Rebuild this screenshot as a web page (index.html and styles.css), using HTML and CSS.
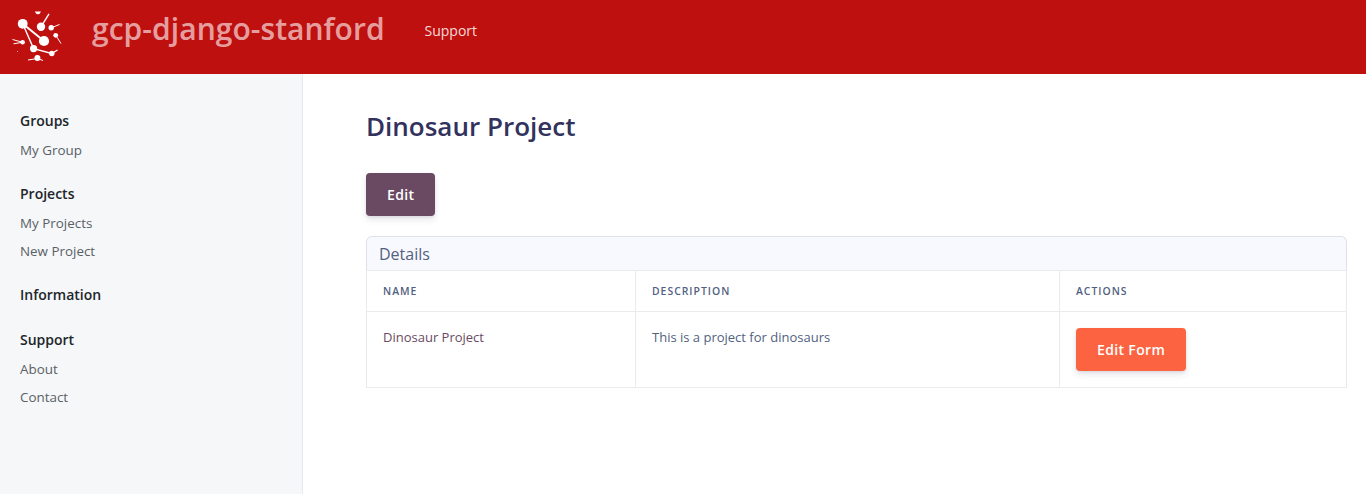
FILE: index.html
```html
<!DOCTYPE html>
<html lang="en">
<head>
<meta charset="utf-8">
<title>gcp-django-stanford</title>
<link rel="stylesheet" href="styles.css">
</head>
<body>
<header class="navbar">
  <svg class="logo" viewBox="0 0 80 74" aria-hidden="true">
    <g fill="#fff">
      <circle cx="22.7" cy="23.8" r="4.9"/>
      <circle cx="41" cy="26.8" r="4.2"/>
      <circle cx="44" cy="41" r="5.1"/>
      <circle cx="33.6" cy="48.6" r="3.6"/>
      <circle cx="51.2" cy="27.8" r="2.7"/>
      <circle cx="55.7" cy="35.3" r="2.4"/>
      <circle cx="22.6" cy="42.3" r="2.3"/>
      <circle cx="51.8" cy="53.5" r="2.7"/>
      <circle cx="37.4" cy="58" r="3"/>
      <path d="M34.7 11.5H41Q40 14.2 38 14.2T34.7 11.5Z"/>
      <path d="M17 51h1v1h-1z" opacity=".6"/>
    </g>
    <g stroke="#fff" fill="none">
      <path stroke-width="2" d="M22.7 23.8 44 41"/>
      <path stroke-width="1.4" d="M22.7 23.8 33.6 48.6 51.8 53.5 57.5 50M41 26.8l8-13"/>
      <path stroke-width="1" d="M51.2 27.8 59.5 24.5M55.7 35.3 61 43.5M22.6 42.3 12.5 39.5M21 42.5 13.5 43.8M37.4 58.5 28 60M37.4 58.5 43 60.5"/>
    </g>
  </svg>
  <a class="brand">gcp-django-stanford</a>
  <a class="nav-link">Support</a>
</header>
<div class="page">
  <nav class="sidebar">
    <section class="group"><h2>Groups</h2><a>My Group</a></section>
    <section class="group"><h2>Projects</h2><a>My Projects</a><a>New Project</a></section>
    <section class="group"><h2>Information</h2></section>
    <section class="group"><h2>Support</h2><a>About</a><a>Contact</a></section>
  </nav>
  <main class="content">
    <h1>Dinosaur Project</h1>
    <a class="btn btn-plum">Edit</a>
    <div class="panel-title">Details</div>
    <table class="table">
      <colgroup><col class="col-name"><col class="col-desc"><col></colgroup>
      <thead><tr><th>Name</th><th>Description</th><th>Actions</th></tr></thead>
      <tbody><tr>
        <td><a class="project-link">Dinosaur Project</a></td>
        <td>This is a project for dinosaurs</td>
        <td><a class="btn btn-orange">Edit Form</a></td>
      </tr></tbody>
    </table>
  </main>
</div>
</body>
</html>
```
FILE: styles.css
```css
* { box-sizing: border-box; }
body {
  margin: 0;
  height: 494px;
  display: flex;
  flex-direction: column;
  overflow: hidden;
  background: #fff;
  color: #525f7f;
  font: 400 16px/24px "Open Sans", sans-serif;
}
.navbar {
  flex: none;
  height: 74px;
  display: flex;
  align-items: flex-start;
  background: #bf1010;
}
.logo { width: 80px; height: 74px; margin-right: 12px; }
.brand {
  padding-top: 6px;
  width: 332.5px;
  color: rgba(255, 255, 255, .62);
  font-size: 30px;
  font-weight: 600;
  line-height: 45px;
  letter-spacing: .05px;
}
.nav-link {
  padding-top: 19px;
  color: rgba(255, 255, 255, .85);
  font-size: 14px;
}
.page { flex: 1; display: flex; min-height: 0; }
.sidebar {
  flex: none;
  width: 303px;
  padding: 35px 20px;
  background: #f5f7f9;
  border-right: 1px solid #e6e8ef;
}
.group {
  display: flex;
  flex-direction: column;
  margin-bottom: 18px;
}
.group h2 {
  margin: 0 0 4px;
  color: #212529;
  font-size: 14px;
  font-weight: 600;
  line-height: 23px;
}
.group a {
  color: #5a5f65;
  font-size: 13.4px;
  line-height: 28px;
}
.content { flex: 1; padding: 34px 19px 0 63px; }
h1 {
  margin: 0 0 29px;
  color: #32325d;
  font-size: 26px;
  font-weight: 600;
  line-height: 36px;
}
.btn {
  display: inline-block;
  height: 43px;
  padding: 10px 21px;
  border-radius: 4px;
  color: #fff;
  font-size: 14px;
  font-weight: 600;
  line-height: 24px;
  letter-spacing: .35px;
  box-shadow: 0 4px 6px rgba(50, 50, 93, .11), 0 1px 3px rgba(0, 0, 0, .08);
  vertical-align: top;
}
.btn-plum { background: #6a4a62; }
.btn-orange { background: #fc6340; }
.panel-title {
  height: 34px;
  margin-top: 20px;
  padding: 5px 12px;
  border: 1px solid #dee2e6;
  border-bottom: 0;
  border-radius: 6px 6px 0 0;
  background: #f8f9fe;
}
.table {
  width: 100%;
  table-layout: fixed;
  border-collapse: collapse;
  font-size: 13px;
}
.col-name { width: 269px; }
.col-desc { width: 424px; }
.table th, .table td {
  border: 1px solid #e9ecef;
  padding: 16px;
  text-align: left;
  vertical-align: top;
}
.table th {
  height: 41px;
  padding: 12px 16px;
  font-size: 10.4px;
  font-weight: 600;
  line-height: 16px;
  letter-spacing: 1px;
  text-transform: uppercase;
}
.table td { height: 76px; line-height: 19.5px; }
.project-link { color: #6a4a62; }
```
